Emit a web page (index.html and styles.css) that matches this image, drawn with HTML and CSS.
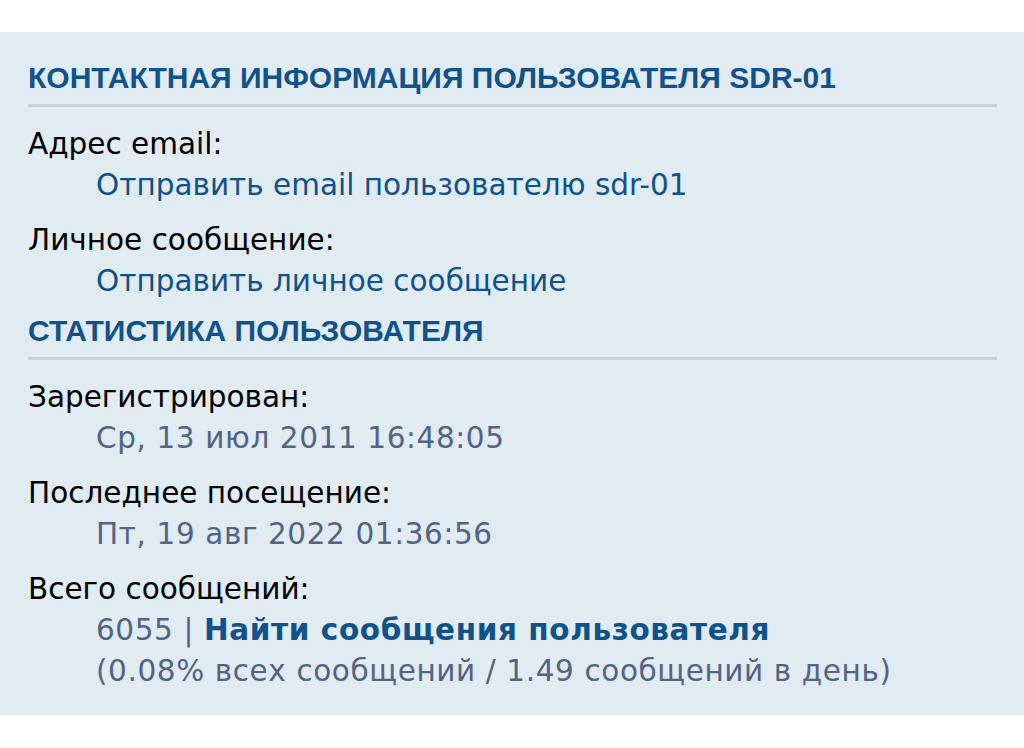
FILE: index.html
```html
<html>
	<head>
		<title>Профиль пользователя sdr-01</title>
		<meta name="viewport" content="width=device-width, initial-scale=1">
		<link rel="stylesheet" href="styles.css">
	</head>
	<body>
		<div class="panel">
			<h3 class="panel-title">Контактная информация пользователя sdr-01</h3>
			<dl class="details">
				<dt>Адрес email:</dt>
				<dd><a href="#">Отправить email пользователю sdr-01</a></dd>
				<dt>Личное сообщение:</dt>
				<dd><a href="#">Отправить личное сообщение</a></dd>
			</dl>
			<h3 class="panel-title">Статистика пользователя</h3>
			<dl class="details">
				<dt>Зарегистрирован:</dt>
				<dd>Ср, 13 июл 2011 16:48:05</dd>
				<dt>Последнее посещение:</dt>
				<dd>Пт, 19 авг 2022 01:36:56</dd>
				<dt>Всего сообщений:</dt>
				<dd>6055 | <a href="#" class="strong">Найти сообщения пользователя</a><br>(0.08% всех сообщений / 1.49 сообщений в день)</dd>
			</dl>
		</div>
	</body>
</html>
```

FILE: styles.css
```css
*{
	box-sizing: border-box;
}
body{
	margin: 0;
	padding: 32px 0 0 0;
	background-color: #fff;
	font-family: "DejaVu Sans", Verdana, sans-serif;
}
.panel{
	background-color: #e1ebf2;
	padding: 29px 27px 11px 28px;
}
.panel-title{
	margin: 0;
	padding: 0 0 9px 0;
	font-family: "Liberation Sans", Arial, sans-serif;
	font-size: 30px;
	font-weight: bold;
	text-transform: uppercase;
	color: #105289;
	border-bottom: 3px solid #cbd0d5;
}
.details{
	margin: 17px 0 0 0;
}
.details dt{
	font-size: 29.5px;
	line-height: 41px;
	color: #000;
}
.details dd{
	margin: 0 0 14px 68px;
	font-size: 29.5px;
	line-height: 41px;
	letter-spacing: .6px;
	color: #536482;
}
.details dd:last-child{
	margin-bottom: 12px;
}
a{
	color: #105289;
	text-decoration: none;
	letter-spacing: 0;
}
a.strong{
	font-weight: bold;
	letter-spacing: .6px;
}
```
